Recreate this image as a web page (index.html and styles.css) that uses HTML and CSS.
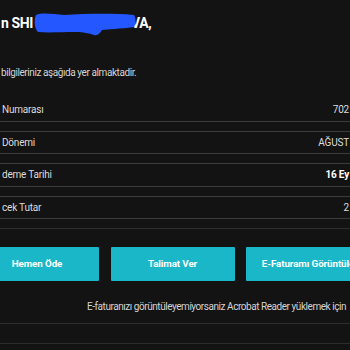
FILE: index.html
```html
<!DOCTYPE html>
<html lang="tr">
<head>
<meta charset="utf-8">
<link rel="stylesheet" href="styles.css">
</head>
<body>
<div class="mail">
  <h1 class="greet">n SHI<svg class="redact" width="102" height="26" viewBox="0 0 102 26"><path d="M2 3 C8 0 20 2 30 3 C50 2 75 1 100 3 C102 6 102 12 100 15 C85 17 75 17 68 18 C66 21 64 24 60 23 C56 22 52 20 40 20 C28 20 14 21 4 20 C0 16 0 7 2 3 Z" fill="#2457ff"/></svg>VA,</h1>
  <p class="intro">bilgileriniz aşağıda yer almaktadir.</p>
  <div class="rows">
    <div class="row"><span class="label">Numarası</span><span class="value">702</span></div>
    <div class="row"><span class="label">Dönemi</span><span class="value">AĞUST</span></div>
    <div class="row"><span class="label">deme Tarihi</span><span class="value strong">16 Ey</span></div>
    <div class="row"><span class="label">cek Tutar</span><span class="value">2</span></div>
  </div>
  <div class="actions">
    <div class="buttons">
      <a class="btn">Hemen Öde</a>
      <a class="btn">Talimat Ver</a>
      <a class="btn">E-Faturamı Görüntüle</a>
    </div>
    <p class="note">E-faturanızı görüntüleyemiyorsaniz Acrobat Reader yüklemek için</p>
  </div>
  <div class="footer-line"></div>
</div>
</body>
</html>
```

FILE: styles.css
```css
html, body {
  margin: 0;
  padding: 0;
  background: #131313;
  width: 350px;
  height: 350px;
  overflow: hidden;
}
.mail {
  font-family: Roboto, "Noto Sans", sans-serif;
  color: #d9d9d9;
  width: 350px;
}
.greet {
  margin: 0;
  padding: 11px 0 0 1px;
  height: 23px;
  font-size: 14px;
  letter-spacing: -0.4px;
  line-height: 20px;
  font-weight: 700;
  color: #ffffff;
  white-space: nowrap;
  display: flex;
  align-items: center;
}
.redact {
  display: block;
  margin: 0 -5px 0 1px;
  position: relative;
  top: 2px;
}
.intro {
  margin: 32px 0 0 1px;
  font-size: 10px;
  letter-spacing: -0.42px;
  line-height: 14px;
  color: #d4d4d4;
}
.rows {
  margin-top: 19px;
}
.row {
  display: flex;
  justify-content: space-between;
  align-items: center;
  height: 21.5px;
  border-bottom: 1px solid #3c3c3c;
  font-size: 10px;
  letter-spacing: -0.2px;
}
.row + .row {
  border-top: 1px solid #3c3c3c;
  margin-top: 9px;
}
.label {
  padding-left: 2px;
  color: #dcdcdc;
}
.value {
  color: #dcdcdc;
  white-space: nowrap;
  padding-right: 1px;
}
.value.strong {
  font-weight: 700;
  color: #ffffff;
}
.actions {
  margin-top: 9px;
  border-top: 1px solid #2c2c2c;
  padding-top: 18px;
  border-bottom: 1px solid #2c2c2c;
  height: 76px;
}
.buttons {
  display: flex;
  gap: 11.5px;
  margin-left: -25px;
  width: 400px;
}
.btn {
  flex: 0 0 124px;
  height: 33.5px;
  background: #19b7c8;
  border-radius: 1px;
  color: #ffffff;
  font-size: 9.8px;
  letter-spacing: -0.1px;
  font-weight: 700;
  display: flex;
  align-items: center;
  justify-content: center;
  white-space: nowrap;
}
.note {
  margin: 19px 0 0 87px;
  font-size: 10px;
  letter-spacing: -0.45px;
  line-height: 14px;
  white-space: nowrap;
  color: #d4d4d4;
}
.footer-line {
  margin-top: 19px;
  border-top: 1px solid #2c2c2c;
}
```
